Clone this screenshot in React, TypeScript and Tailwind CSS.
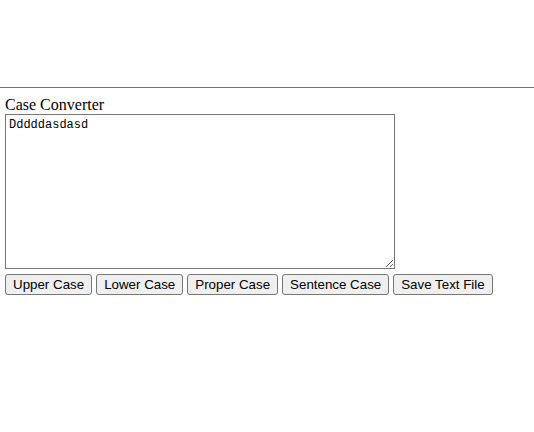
// Case converter page
const buttons = ['Upper Case', 'Lower Case', 'Proper Case', 'Sentence Case', 'Save Text File']

export default function App() {
  return (
    <main className="w-[534px] h-[432px] bg-white text-black">
      {/* Empty header area */}
      <div className="h-[87px]" />
      <hr className="border-0 border-t border-[#6e6e9a]" />

      <section className="px-[5px] pt-[8px] flex flex-col">
        <h1 className="text-[16px] leading-[18px] font-normal" style={{ fontFamily: '"Liberation Serif", serif' }}>
          Case Converter
        </h1>

        <textarea
          defaultValue="Dddddasdasd"
          className="block w-[390px] h-[155px] border border-[#767676] p-[3px] text-[12px] leading-[15px] outline-none"
          style={{ fontFamily: '"Liberation Mono", monospace' }}
        />

        {/* Actions */}
        <div className="flex flex-row gap-[4px] mt-[5px]">
          {buttons.map((label) => (
            <button
              key={label}
              className="h-[21px] px-[7px] border border-[#767676] rounded-[3px] bg-[#efefef] text-[13.333px] leading-[16px] text-black"
              style={{ fontFamily: '"Liberation Sans", Arial, sans-serif' }}
            >
              {label}
            </button>
          ))}
        </div>
      </section>
    </main>
  )
}
